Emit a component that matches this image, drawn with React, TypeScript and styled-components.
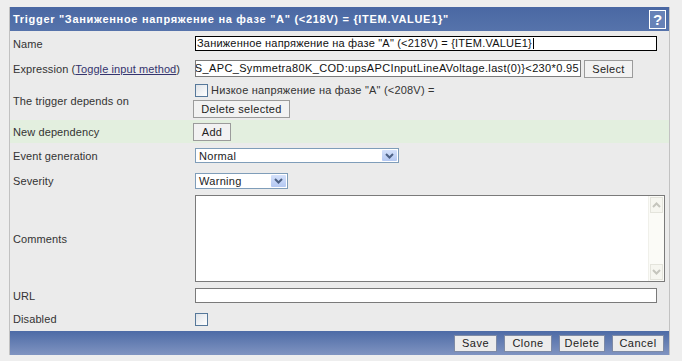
import React from 'react';
import styled, { createGlobalStyle } from 'styled-components';

const GlobalStyle = createGlobalStyle`
  html, body {
    margin: 0;
    padding: 0;
    background: #eeeeee;
  }
  body {
    font-family: "Liberation Sans", Arial, sans-serif;
    font-size: 11px;
    color: #333333;
  }
`;

const Page = styled.div`
  width: 682px;
  height: 361px;
  box-sizing: border-box;
  padding: 7px 12px 6px 9px;
  background: #eeeeee;
`;

const Panel = styled.div`
  border-left: 1px solid #c2c2c2;
  border-right: 1px solid #c2c2c2;
  background: #ebebeb;
  display: flex;
  flex-direction: column;
`;

const Header = styled.div`
  height: 24px;
  display: flex;
  align-items: center;
  justify-content: space-between;
  padding: 0 3px 0 3px;
  background: linear-gradient(#4a68a3, #5673ab);
  color: #ffffff;
  font-weight: bold;
  letter-spacing: 0.7px;
`;

const HelpIcon = styled.div`
  width: 15px;
  height: 17px;
  border: 1px solid #ffffff;
  background: #6782b7;
  color: #ffffff;
  font-size: 15px;
  font-weight: bold;
  line-height: 17px;
  text-align: center;
  letter-spacing: 0;
`;

const Row = styled.div<{ $h: number; $green?: boolean }>`
  height: ${p => p.$h}px;
  display: grid;
  grid-template-columns: 183px 1fr;
  align-items: center;
  background: ${p => (p.$green ? '#e3efdf' : 'transparent')};
`;

const Label = styled.div`
  padding-left: 3px;
  color: #333333;
  letter-spacing: 0.1px;
  white-space: nowrap;
`;

const Link = styled.a`
  color: #34346e;
  text-decoration: underline;
  cursor: pointer;
`;

const Cell = styled.div`
  display: flex;
  align-items: center;
  gap: 3px;
`;

const Stack = styled.div`
  display: flex;
  flex-direction: column;
  align-items: flex-start;
  gap: 3px;
`;

const TextBox = styled.div<{ $w: number; $focus?: boolean; $right?: boolean }>`
  box-sizing: border-box;
  width: ${p => p.$w}px;
  height: ${p => (p.$right ? 17 : 15)}px;
  margin-left: 2px;
  border: 1px solid ${p => (p.$focus ? '#000000' : '#7a7a7a')};
  background: #ffffff;
  color: #111111;
  white-space: nowrap;
  overflow: hidden;
  display: flex;
  align-items: center;
  justify-content: ${p => (p.$right ? 'flex-end' : 'flex-start')};
  padding: 0 1px;
  line-height: 13px;
  letter-spacing: ${p => (p.$right ? 0.35 : 0.2)}px;
`;

const Caret = styled.span`
  display: inline-block;
  width: 1px;
  height: 11px;
  background: #000000;
  margin-left: 1px;
`;

const Button = styled.button<{ $w?: number }>`
  box-sizing: border-box;
  height: 18px;
  ${p => (p.$w ? `width: ${p.$w}px;` : '')}
  padding: 0;
  border: 1px solid #9b9b9b;
  background: #f2f2f2;
  color: #222222;
  font-family: inherit;
  font-size: 11px;
  letter-spacing: 0.3px;
  line-height: 16px;
`;

const CheckBox = styled.span`
  display: inline-block;
  box-sizing: border-box;
  width: 13px;
  height: 13px;
  margin-left: 2px;
  border: 1px solid #56789a;
  background: linear-gradient(135deg, #dfe3e8, #ffffff);
`;

const DepText = styled.span`
  color: #333333;
  letter-spacing: 0.2px;
`;

const Select = styled.div<{ $w: number; $h: number }>`
  box-sizing: border-box;
  width: ${p => p.$w}px;
  height: ${p => p.$h}px;
  margin-left: 2px;
  border: 1px solid #7f9db9;
  background: #ffffff;
  display: flex;
  align-items: stretch;
  justify-content: space-between;
  color: #222222;
`;

const SelectText = styled.span`
  padding-left: 3px;
  display: flex;
  align-items: center;
  letter-spacing: 0.3px;
`;

const SelectArrow = styled.span`
  width: 15px;
  margin: 1px;
  border-radius: 1px;
  background: linear-gradient(#d4e1fb, #b4c8f2);
  display: flex;
  align-items: center;
  justify-content: center;
`;

const TextArea = styled.div`
  box-sizing: border-box;
  width: 470px;
  height: 87px;
  margin-left: 2px;
  border: 1px solid #7a7a7a;
  background: #ffffff;
  display: flex;
  justify-content: flex-end;
`;

const ScrollBar = styled.div`
  width: 15px;
  background: #fbfbf7;
  border-left: 1px solid #f0f0ea;
  display: flex;
  flex-direction: column;
  justify-content: space-between;
  padding: 1px 0;
`;

const ScrollButton = styled.div`
  height: 14px;
  margin: 0 1px;
  border: 1px solid #e4e4dc;
  background: #f6f6f0;
  display: flex;
  align-items: center;
  justify-content: center;
`;

const Footer = styled.div`
  height: 24px;
  display: flex;
  align-items: center;
  justify-content: flex-end;
  gap: 7px;
  padding-right: 5px;
  background: linear-gradient(#4d6ba6, #8094c1);
`;

const FooterButton = styled.button<{ $w: number }>`
  box-sizing: border-box;
  width: ${p => p.$w}px;
  height: 17px;
  padding: 0;
  border: 1px solid #7d8aa5;
  background: #ececec;
  color: #222222;
  font-family: inherit;
  font-size: 11px;
  letter-spacing: 0.5px;
  line-height: 15px;
`;

const Chevron: React.FC<{ up?: boolean; color?: string }> = ({ up, color = '#4d6185' }) => (
  <svg width="9" height="6" viewBox="0 0 9 6">
    <path
      d={up ? 'M1 5 L4.5 1.5 L8 5' : 'M1 1 L4.5 4.5 L8 1'}
      fill="none"
      stroke={color}
      strokeWidth="2"
    />
  </svg>
);

const footerButtons = [
  { label: 'Save', w: 43 },
  { label: 'Clone', w: 48 },
  { label: 'Delete', w: 46 },
  { label: 'Cancel', w: 52 },
];

const App: React.FC = () => {
  return (
    <>
      <GlobalStyle />
      <Page>
        <Panel>
          <Header>
            <span>Trigger "Заниженное напряжение на фазе "A" (&lt;218V) = {'{ITEM.VALUE1}'}"</span>
            <HelpIcon>?</HelpIcon>
          </Header>

          <Row $h={25}>
            <Label>Name</Label>
            <Cell>
              <TextBox $w={462} $focus>
                Заниженное напряжение на фазе "A" (&lt;218V) = {'{ITEM.VALUE1}'}
                <Caret />
              </TextBox>
            </Cell>
          </Row>

          <Row $h={25}>
            <Label>
              Expression (<Link>Toggle input method</Link>)
            </Label>
            <Cell>
              <TextBox $w={386} $right>
                {'{UPS_APC_Symmetra80K_COD:upsAPCInputLineAVoltage.last(0)}<230*0.95'}
              </TextBox>
              <Button $w={49}>Select</Button>
            </Cell>
          </Row>

          <Row $h={39}>
            <Label>The trigger depends on</Label>
            <Stack>
              <Cell>
                <CheckBox />
                <DepText>Низкое напряжение на фазе "A" (&lt;208V) =</DepText>
              </Cell>
              <Button $w={97}>Delete selected</Button>
            </Stack>
          </Row>

          <Row $h={23} $green>
            <Label>New dependency</Label>
            <Cell>
              <Button $w={38}>Add</Button>
            </Cell>
          </Row>

          <Row $h={25}>
            <Label>Event generation</Label>
            <Cell>
              <Select $w={204} $h={15}>
                <SelectText>Normal</SelectText>
                <SelectArrow>
                  <Chevron />
                </SelectArrow>
              </Select>
            </Cell>
          </Row>

          <Row $h={25}>
            <Label>Severity</Label>
            <Cell>
              <Select $w={93} $h={16}>
                <SelectText>Warning</SelectText>
                <SelectArrow>
                  <Chevron />
                </SelectArrow>
              </Select>
            </Cell>
          </Row>

          <Row $h={91}>
            <Label>Comments</Label>
            <Cell>
              <TextArea>
                <ScrollBar>
                  <ScrollButton>
                    <Chevron up color="#c5c5bd" />
                  </ScrollButton>
                  <ScrollButton>
                    <Chevron color="#c5c5bd" />
                  </ScrollButton>
                </ScrollBar>
              </TextArea>
            </Cell>
          </Row>

          <Row $h={23}>
            <Label>URL</Label>
            <Cell>
              <TextBox $w={462} />
            </Cell>
          </Row>

          <Row $h={24}>
            <Label>Disabled</Label>
            <Cell>
              <CheckBox />
            </Cell>
          </Row>

          <Footer>
            {footerButtons.map(b => (
              <FooterButton key={b.label} $w={b.w}>
                {b.label}
              </FooterButton>
            ))}
          </Footer>
        </Panel>
      </Page>
    </>
  );
};

export default App;
